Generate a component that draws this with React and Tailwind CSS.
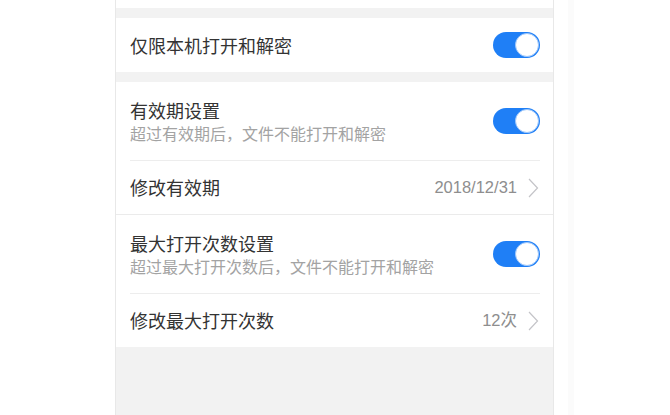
import React, { useState } from 'react';

const font = { fontFamily: '"Noto Sans CJK SC", "Noto Sans", sans-serif' };

const Toggle = ({ on, onChange }) => (
  <button
    type="button"
    onClick={onChange}
    className={`relative w-[47px] h-[26px] rounded-full shrink-0 transition ${on ? 'bg-[#1f7ff6]' : 'bg-[#e5e5ea]'}`}
  >
    <span
      className={`absolute top-[1px] w-[24px] h-[24px] rounded-full bg-white border border-[#9cc6fb] transition-all ${on ? 'right-[1px]' : 'left-[1px]'}`}
    />
  </button>
);

const Chevron = () => (
  <svg width="11" height="20" viewBox="0 0 11 20" className="shrink-0 ml-[11px]">
    <path d="M1 1 L9.5 10 L1 19" fill="none" stroke="#c4c4c8" strokeWidth="1.2" />
  </svg>
);

const SwitchRow = ({ title, sub, on, onChange }) => (
  <div className="flex items-center justify-between h-[78px] pl-[14px] pr-[13px]">
    <div className="flex flex-col">
      <span className="text-[18px] leading-[24px] text-[#333]">{title}</span>
      <span className="text-[16px] leading-[22px] text-[#a3a3a3]">{sub}</span>
    </div>
    <Toggle on={on} onChange={onChange} />
  </div>
);

const LinkRow = ({ title, value }) => (
  <div className="flex items-center justify-between h-[53px] pl-[14px] pr-[14px]">
    <span className="text-[18px] text-[#333]">{title}</span>
    <div className="flex items-center">
      <span className="text-[16.5px] text-[#8e8e8e]" style={{ fontFamily: '"Liberation Sans", "Noto Sans CJK SC", sans-serif' }}>{value}</span>
      <Chevron />
    </div>
  </div>
);

const App = () => {
  const [local, setLocal] = useState(true);
  const [expiry, setExpiry] = useState(true);
  const [maxOpen, setMaxOpen] = useState(true);

  return (
    <div className="w-[670px] h-[415px] bg-white overflow-hidden flex" style={font}>
      <div className="w-[439px] ml-[115px] h-full flex flex-col border-x border-[#e8e8e8] bg-[#f2f2f2]">
        <div className="h-[8px] bg-white" />
        <div className="h-[10px]" />
        <div className="flex items-center justify-between h-[54px] bg-white pl-[14px] pr-[13px]">
          <span className="text-[18px] text-[#333]">仅限本机打开和解密</span>
          <Toggle on={local} onChange={() => setLocal(!local)} />
        </div>
        <div className="h-[10px]" />
        <div className="bg-white">
          <SwitchRow
            title="有效期设置"
            sub="超过有效期后，文件不能打开和解密"
            on={expiry}
            onChange={() => setExpiry(!expiry)}
          />
          <div className="h-px bg-[#ededed] mx-[14px] mr-[13px]" />
          <LinkRow title="修改有效期" value="2018/12/31" />
          <div className="h-px bg-[#ebebeb]" />
          <SwitchRow
            title="最大打开次数设置"
            sub="超过最大打开次数后，文件不能打开和解密"
            on={maxOpen}
            onChange={() => setMaxOpen(!maxOpen)}
          />
          <div className="h-px bg-[#ededed] mx-[14px] mr-[13px]" />
          <LinkRow title="修改最大打开次数" value="12次" />
        </div>
        <div className="flex-1" />
      </div>
      <div className="w-[6px] ml-[14px] h-full bg-[#fbfbfb]" />
    </div>
  );
};

export default App;
